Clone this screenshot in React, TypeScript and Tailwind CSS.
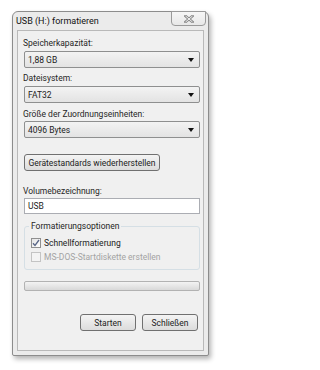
import React from "react";

const font = { fontFamily: 'Roboto, "Noto Sans", sans-serif' };

const Combo = ({ value }: { value: string }) => (
  <div className="flex items-center justify-between w-[176px] h-[17px] ml-[6px] border border-[#8e8f8f] rounded-[2px] bg-gradient-to-b from-[#f3f3f3] to-[#e3e3e3] pl-[3px] pr-[5px]">
    <span className="text-[8.5px] leading-[12px] text-[#222] whitespace-nowrap">{value}</span>
    <svg width="6" height="4" viewBox="0 0 6 4">
      <path d="M0 0h6L3 4z" fill="#111" />
    </svg>
  </div>
);

const Label = ({ text, className = "" }: { text: string; className?: string }) => (
  <div className={`text-[8.5px] leading-[12px] text-[#262626] ml-[5px] whitespace-nowrap ${className}`}>{text}</div>
);

const Button = ({ text, className = "" }: { text: string; className?: string }) => (
  <div
    className={`flex items-center justify-center h-[17px] border border-[#707070] rounded-[3px] bg-gradient-to-b from-[#f4f4f4] to-[#dcdcdc] text-[8.5px] leading-[12px] text-[#222] whitespace-nowrap ${className}`}
  >
    {text}
  </div>
);

const Check = ({ checked, label, disabled }: { checked?: boolean; label: string; disabled?: boolean }) => (
  <div className="flex items-center gap-[3px] h-[14px]">
    <div
      className={`flex items-center justify-center w-[10px] h-[10px] border ${
        disabled ? "border-[#c4c4c4] bg-[#f4f4f4]" : "border-[#8f8f8f] bg-gradient-to-br from-[#e4e4e4] to-[#ffffff]"
      }`}
    >
      {checked && (
        <svg width="8" height="8" viewBox="0 0 8 8">
          <path d="M1 4.2l2 2.2L7 1" stroke="#5a6788" strokeWidth="1.3" fill="none" />
        </svg>
      )}
    </div>
    <span className={`text-[8.5px] leading-[12px] whitespace-nowrap ${disabled ? "text-[#a3a3a3]" : "text-[#222]"}`}>
      {label}
    </span>
  </div>
);

export default function App() {
  return (
    <div className="min-h-[370px] bg-white pt-[11px] pl-[12px]" style={font}>
      <div className="relative w-[197px] h-[345px] border border-[#8c8c8c] rounded-t-[6px] rounded-b-[2px] bg-[#ebebeb] shadow-[2px_3px_5px_rgba(0,0,0,0.3)] flex flex-col">
        {/* title bar */}
        <div className="h-[18px] flex items-center pl-[3px]">
          <span className="text-[9px] leading-[12px] text-[#111] whitespace-nowrap">USB (H:) formatieren</span>
        </div>
        <div className="absolute right-[2px] -top-[1px] w-[35px] h-[15px] border border-[#9a9a9a] rounded-b-[4px] bg-gradient-to-b from-[#f6f6f6] to-[#e8e8e8] flex items-center justify-center">
          <svg width="10" height="8" viewBox="0 0 10 8">
            <path d="M1.5 1l7 6M8.5 1l-7 6" stroke="#8a8a8a" strokeWidth="2.6" strokeLinecap="square" />
            <path d="M1.5 1l7 6M8.5 1l-7 6" stroke="#f2f2f2" strokeWidth="1" />
          </svg>
        </div>

        {/* client area */}
        <div className="flex-1 mx-[4px] mb-[4px] border border-[#b9b9b9] bg-[#f0f0f0] flex flex-col">
          <Label text="Speicherkapazität:" className="mt-[6px]" />
          <div className="mt-[2px]">
            <Combo value="1,88 GB" />
          </div>
          <Label text="Dateisystem:" className="mt-[4px]" />
          <div className="mt-[2px]">
            <Combo value="FAT32" />
          </div>
          <Label text="Größe der Zuordnungseinheiten:" className="mt-[5px]" />
          <div className="mt-[1px]">
            <Combo value="4096 Bytes" />
          </div>
          <Button text="Gerätestandards wiederherstellen" className="w-[136px] ml-[6px] mt-[16px]" />
          <Label text="Volumebezeichnung:" className="mt-[14px]" />
          <div className="w-[176px] h-[16px] ml-[6px] mt-[1px] border border-[#abadb3] bg-white flex items-center pl-[3px]">
            <span className="text-[8.5px] leading-[12px] text-[#222]">USB</span>
          </div>

          {/* group box */}
          <div className="relative w-[176px] h-[44px] ml-[6px] mt-[12px] border border-[#d5dfe5] rounded-[3px] pt-[9px] pl-[6px]">
            <span className="absolute -top-[7px] left-[4px] px-[2px] bg-[#f0f0f0] text-[8.5px] leading-[12px] text-[#262626] whitespace-nowrap">
              Formatierungsoptionen
            </span>
            <Check checked label="Schnellformatierung" />
            <Check disabled label="MS-DOS-Startdiskette erstellen" />
          </div>

          {/* progress bar */}
          <div className="w-[176px] h-[10px] ml-[6px] mt-[11px] border border-[#b2b2b2] rounded-[2px] bg-gradient-to-b from-[#f3f3f3] via-[#e6e6e6] to-[#d9d9d9]" />

          <div className="flex gap-[6px] ml-[62px] mt-[23px]">
            <Button text="Starten" className="w-[56px] h-[16px]" />
            <Button text="Schließen" className="w-[56px] h-[16px]" />
          </div>
        </div>
      </div>
    </div>
  );
}
